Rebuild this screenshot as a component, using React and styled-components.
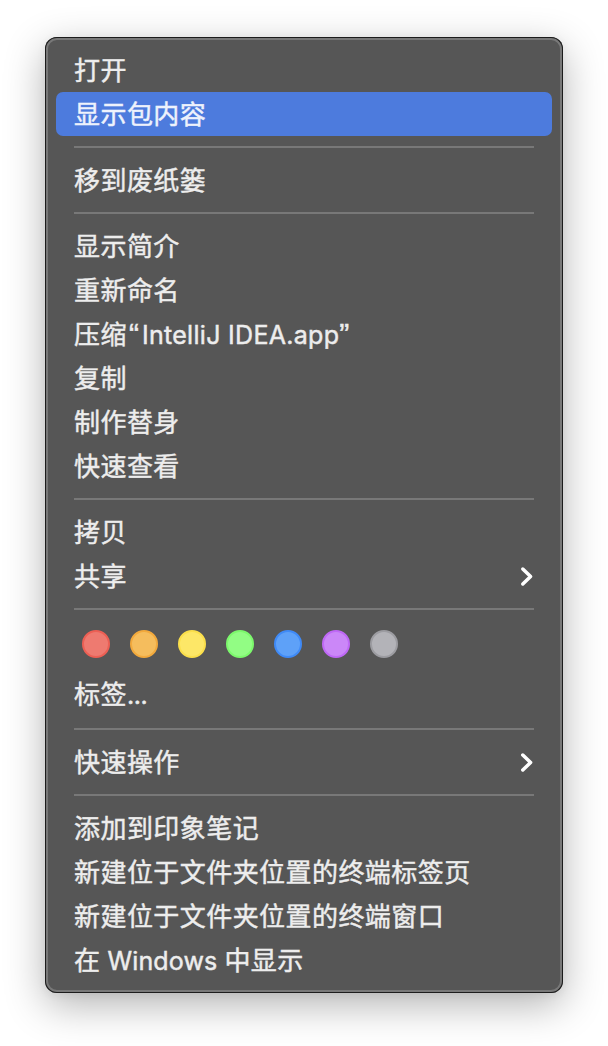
import React from "react";
import styled, { createGlobalStyle } from "styled-components";

const GlobalStyle = createGlobalStyle`
  body {
    margin: 0;
    background: #ffffff;
  }
`;

const Desktop = styled.main`
  box-sizing: border-box;
  height: 1046px;
  padding: 37px 45px 53px;
  overflow: hidden;
`;

const Menu = styled.div`
  box-sizing: border-box;
  width: 518px;
  height: 956px;
  padding: 11px;
  border-radius: 12px;
  background: #565656;
  box-shadow:
    inset 0 0 0 1px #1c1c1c,
    inset 0 0 0 3px #787878,
    0 12px 40px rgba(0, 0, 0, 0.3),
    0 2px 10px rgba(0, 0, 0, 0.06);
  font-size: 26px;
  color: #ededed;
`;

const Item = styled.div`
  box-sizing: border-box;
  display: flex;
  align-items: center;
  justify-content: space-between;
  height: 44px;
  padding: 0 18px;
  border-radius: 7px;
  background: ${(p) => (p.$active ? "#4d7bdd" : "transparent")};
  color: ${(p) => (p.$active ? "#eef2fc" : "inherit")};
`;

const Label = styled.span`
  line-height: 42px;
  padding-bottom: 2px;
  letter-spacing: 0.44px;
  white-space: pre;
  font-family: "Noto Sans CJK SC", sans-serif;
  -webkit-text-stroke: 0.45px currentColor;
`;

const Latin = styled.span`
  line-height: 0;
  font-family: Inter, sans-serif;
  font-size: 25px;
  letter-spacing: ${(p) => p.$spacing || 0}px;
`;

const Quote = styled.span`
  line-height: 0;
  font-family: "Liberation Sans", sans-serif;
  font-size: 30px;
  letter-spacing: 0;
  margin: ${(p) => (p.$open ? "0 3px 0 2px" : "0")};
`;

const Separator = styled.div`
  height: 2px;
  margin: 10px 18px;
  background: #787878;
`;

const Tags = styled.div`
  display: flex;
  gap: 20px;
  padding: 10px 26px 14px;
`;

const Dot = styled.span`
  box-sizing: border-box;
  width: 28px;
  height: 28px;
  border: 2px solid ${(p) => p.$ring};
  border-radius: 50%;
  background: ${(p) => p.$fill};
`;

const TagsFooter = styled.div`
  padding-bottom: 2px;
`;

const Arrow = styled.svg`
  width: 14px;
  height: 22px;
  flex: none;
`;

const Chevron = () => (
  <Arrow viewBox="0 0 14 22" fill="none">
    <path
      d="M2.8 4 L10.6 11.5 L2.8 19"
      stroke="#ffffff"
      strokeWidth="3.5"
      strokeLinecap="round"
      strokeLinejoin="round"
    />
  </Arrow>
);

const tags = [
  ["#ee7a70", "#ec5f54"],
  ["#f5bd5d", "#f2a93c"],
  ["#fde767", "#fbdf4b"],
  ["#92fd84", "#7cf96c"],
  ["#5ea1f8", "#3f8af7"],
  ["#cb87f8", "#bf68f6"],
  ["#b3b3b8", "#9c9ca1"],
];

const MenuItem = ({ children, active, submenu }) => (
  <Item $active={active} role="menuitem">
    <Label>{children}</Label>
    {submenu && <Chevron />}
  </Item>
);

export default function App() {
  return (
    <Desktop>
      <GlobalStyle />
      <Menu role="menu">
        <MenuItem>打开</MenuItem>
        <MenuItem active>显示包内容</MenuItem>
        <Separator />
        <MenuItem>移到废纸篓</MenuItem>
        <Separator />
        <MenuItem>显示简介</MenuItem>
        <MenuItem>重新命名</MenuItem>
        <MenuItem>
          压缩<Quote $open>“</Quote>
          <Latin $spacing={0.3}>IntelliJ IDEA.app</Latin>
          <Quote>”</Quote>
        </MenuItem>
        <MenuItem>复制</MenuItem>
        <MenuItem>制作替身</MenuItem>
        <MenuItem>快速查看</MenuItem>
        <Separator />
        <MenuItem>拷贝</MenuItem>
        <MenuItem submenu>共享</MenuItem>
        <Separator />
        <Tags>
          {tags.map(([fill, ring]) => (
            <Dot key={fill} $fill={fill} $ring={ring} />
          ))}
        </Tags>
        <TagsFooter>
          <MenuItem>
            标签<Latin $spacing={-0.4}>...</Latin>
          </MenuItem>
        </TagsFooter>
        <Separator />
        <MenuItem submenu>快速操作</MenuItem>
        <Separator />
        <MenuItem>添加到印象笔记</MenuItem>
        <MenuItem>新建位于文件夹位置的终端标签页</MenuItem>
        <MenuItem>新建位于文件夹位置的终端窗口</MenuItem>
        <MenuItem>
          在<Latin $spacing={0.1}> Windows </Latin>中显示
        </MenuItem>
      </Menu>
    </Desktop>
  );
}
